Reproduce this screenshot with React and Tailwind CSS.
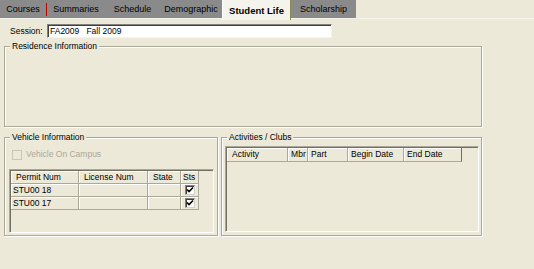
import React from "react";

const tabs = [
  { label: "Courses", w: "w-[46px]" },
  { label: "Summaries", w: "w-[58px]" },
  { label: "Schedule", w: "w-[55px]" },
  { label: "Demographic", w: "w-[62px]" },
];

const GroupBox = ({ title, className, children }) => (
  <div
    className={`relative border border-[#aca899] shadow-[inset_1px_1px_0_#fff,1px_1px_0_#fff] ${className}`}
  >
    <span className="absolute -top-[7px] left-[5px] bg-[#ece9d8] px-[2px] leading-[12px]">
      {title}
    </span>
    {children}
  </div>
);

const HeaderCell = ({ children, className }) => (
  <div
    className={`h-full shrink-0 border-r border-b border-[#aca899] shadow-[inset_1px_1px_0_#fff] pl-[5px] flex items-center ${className}`}
  >
    {children}
  </div>
);

const DataCell = ({ children, className }) => (
  <div
    className={`h-full shrink-0 border-r border-b border-[#aca899] shadow-[inset_1px_1px_0_#fff] pl-[2px] flex items-center ${className}`}
  >
    {children}
  </div>
);

const Check = () => (
  <div className="w-[10px] h-[10px] bg-white border border-[#808080] border-b-[#d4d0c8] border-r-[#d4d0c8] shadow-[inset_1px_1px_0_#404040] flex items-center justify-center">
    <svg width="8" height="8" viewBox="0 0 8 8">
      <path d="M1 3.5 L3 5.5 L7 1.5" stroke="#000" strokeWidth="1.6" fill="none" />
    </svg>
  </div>
);

const vehicles = ["STU00 18", "STU00 17"];

export default function App() {
  return (
    <div className="w-[534px] h-[269px] overflow-hidden bg-[#ece9d8] text-[8.5px] leading-[11px] text-black font-['Liberation_Sans',Arial,sans-serif]">
      {/* tab strip */}
      <div className="flex h-[20px]">
        <div className="flex w-[222px] h-[19px] bg-[#8a8a8a] border-b border-[#f4f3ec]">
          {tabs.map((t, i) => (
            <React.Fragment key={t.label}>
              <div className={`${t.w} flex items-center justify-center text-[9px]`}>
                {t.label}
              </div>
              {i === 0 && <div className="w-px h-[13px] mt-[3px] bg-[#c00000]" />}
            </React.Fragment>
          ))}
        </div>
        <div className="w-[69px] h-[20px] bg-[#f4f3ec] border-l border-white border-r border-r-[#8c8a55] flex items-center justify-center font-bold text-[9.5px]">
          Student Life
        </div>
        <div className="w-[65px] h-[19px] bg-[#8a8a8a] border-b border-[#f4f3ec] flex items-center justify-center text-[9px]">
          Scholarship
        </div>
        <div className="flex-1 h-[19px] border-b border-[#f4f3ec]" />
      </div>

      {/* session */}
      <div className="flex items-center h-[14px] mt-[4px] pl-[10px]">
        <span className="w-[37px]">Session:</span>
        <div className="w-[285px] h-[14px] bg-white border border-[#808080] border-b-[#f4f3ec] border-r-[#f4f3ec] shadow-[inset_1px_1px_0_#404040] flex items-center pl-[2px] whitespace-pre">
          FA2009   Fall 2009
        </div>
      </div>

      <div className="ml-[4px] w-[478px]">
        <GroupBox title="Residence Information" className="mt-[8px] h-[81px]" />

        <div className="flex gap-[3px] mt-[10px]">
          <GroupBox title="Vehicle Information" className="w-[215px] h-[99px]">
            <div className="flex items-center gap-[4px] mt-[11px] ml-[7px] text-[#aca899]">
              <div className="w-[10px] h-[10px] border border-[#c9c7ba] bg-[#ece9d8]" />
              <span>Vehicle On Campus</span>
            </div>
            <div className="mt-[9px] ml-[4px] w-[205px] h-[64px] border border-[#aca899] border-b-white border-r-white shadow-[inset_1px_1px_0_#716f64]">
              <div className="flex h-[13px] mt-px ml-px">
                <HeaderCell className="w-[68px]">Permit Num</HeaderCell>
                <HeaderCell className="w-[69px]">License Num</HeaderCell>
                <HeaderCell className="w-[33px]">State</HeaderCell>
                <HeaderCell className="w-[18px] !pl-[2px]">Sts</HeaderCell>
              </div>
              {vehicles.map((v) => (
                <div key={v} className="flex h-[13px] ml-px">
                  <DataCell className="w-[68px]">{v}</DataCell>
                  <DataCell className="w-[69px]" />
                  <DataCell className="w-[33px]" />
                  <DataCell className="w-[18px] justify-center !pl-0">
                    <Check />
                  </DataCell>
                </div>
              ))}
            </div>
          </GroupBox>

          <GroupBox title="Activities / Clubs" className="w-[262px] h-[99px]">
            <div className="mt-[8px] ml-[3px] w-[254px] h-[86px] border border-[#aca899] border-b-white border-r-white shadow-[inset_1px_1px_0_#716f64]">
              <div className="flex h-[14px] mt-px ml-px">
                <HeaderCell className="w-[61px]">Activity</HeaderCell>
                <HeaderCell className="w-[20px] !pl-[3px]">Mbr</HeaderCell>
                <HeaderCell className="w-[40px] !pl-[3px]">Part</HeaderCell>
                <HeaderCell className="w-[56px] !pl-[3px]">Begin Date</HeaderCell>
                <HeaderCell className="w-[58px] !pl-[3px] border-r-[#716f64]">End Date</HeaderCell>
              </div>
            </div>
          </GroupBox>
        </div>
      </div>
    </div>
  );
}
